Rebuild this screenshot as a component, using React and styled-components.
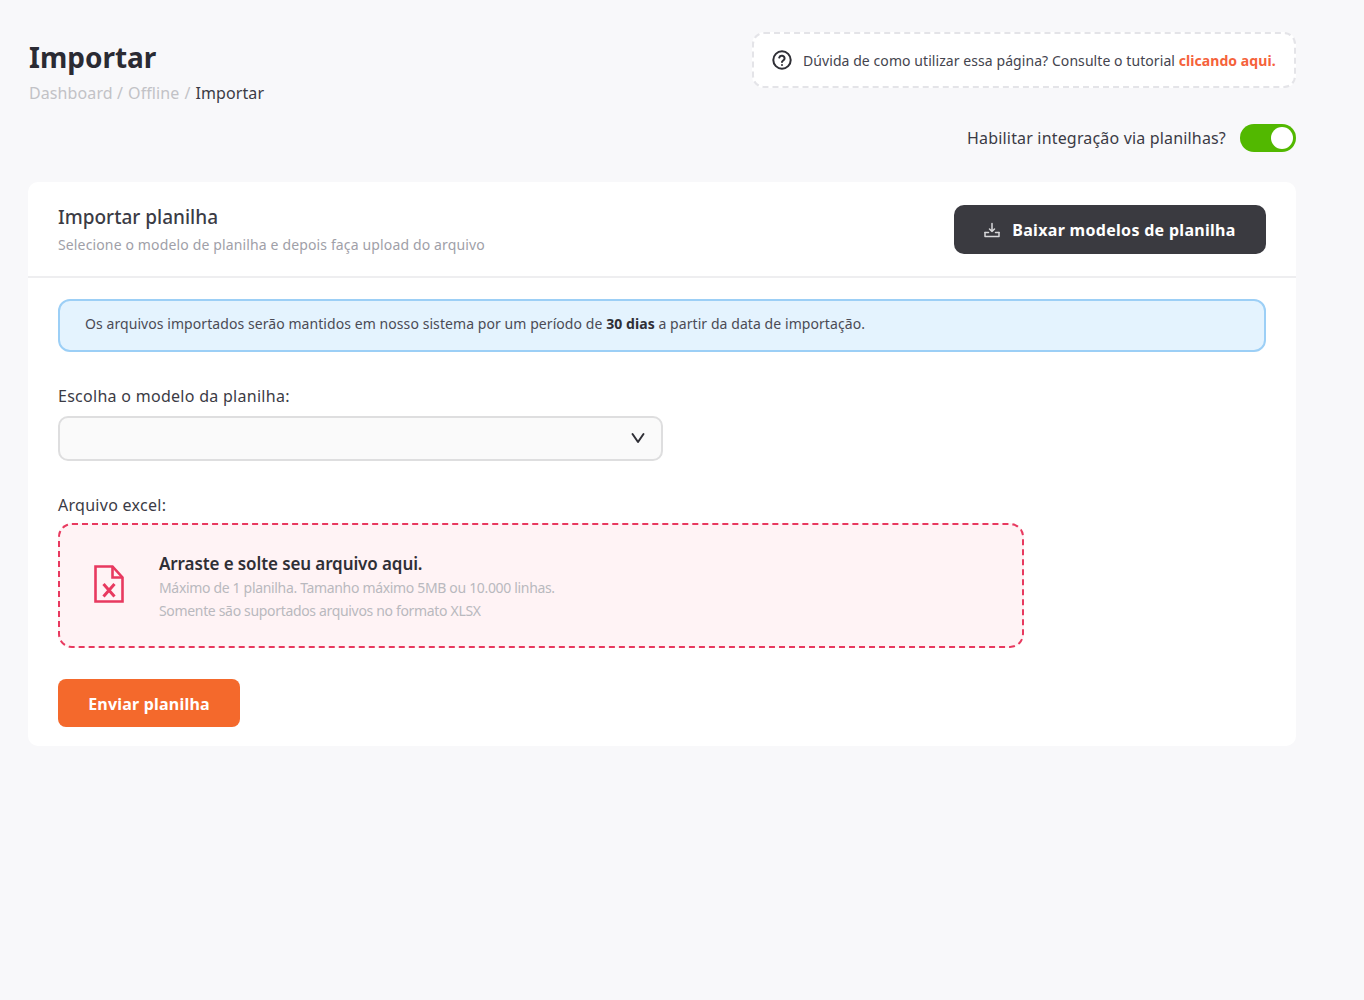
import React from "react";
import styled, { createGlobalStyle } from "styled-components";

const Global = createGlobalStyle`
  html, body { margin: 0; padding: 0; background: #f8f8fa; }
  body { font-family: "Noto Sans", "Open Sans", sans-serif; color: #2f2f36; }
  * { box-sizing: border-box; }
`;

const Page = styled.div`
  width: 1364px;
  min-height: 1000px;
  padding: 32px 68px 0 28px;
`;
const Header = styled.header`
  display: flex;
  justify-content: space-between;
  align-items: flex-start;
  height: 150px;
`;
const TitleBlock = styled.div`
  padding: 6px 0 0 1px;
`;
const Title = styled.h1`
  margin: 0;
  font-size: 28px;
  line-height: 38px;
  font-weight: 700;
  color: #2b2b33;
`;
const Crumbs = styled.div`
  margin-top: 6px;
  font-size: 16px;
  line-height: 22px;
  letter-spacing: 0.1px;
  color: #c2c2c6;
  display: flex;
  gap: 5px;
`;
const CrumbCurrent = styled.span`
  color: #3b3b45;
`;
const HeaderRight = styled.div`
  display: flex;
  flex-direction: column;
  align-items: flex-end;
  gap: 36px;
`;
const Tutorial = styled.div`
  width: 544px;
  height: 56px;
  display: flex;
  align-items: center;
  gap: 10px;
  padding-left: 17px;
  background: #fff;
  border: 2px dashed #e4e4e8;
  border-radius: 12px;
  font-size: 14px;
  letter-spacing: 0.07px;
  color: #44444e;
  white-space: nowrap;
`;
const TutorialLink = styled.b`
  color: #f5623a;
  font-weight: 700;
`;
const ToggleRow = styled.div`
  display: flex;
  align-items: center;
  gap: 14px;
  font-size: 16px;
  letter-spacing: 0.17px;
  color: #3b3b45;
  height: 28px;
`;
const Toggle = styled.div`
  position: relative;
  width: 56px;
  height: 28px;
  border-radius: 14px;
  background: #52b800;
`;
const Knob = styled.span`
  position: absolute;
  right: 3px;
  top: 3px;
  width: 22px;
  height: 22px;
  border-radius: 50%;
  background: #fff;
`;
const Card = styled.section`
  height: 564px;
  background: #fff;
  border-radius: 10px;
`;
const CardHead = styled.div`
  height: 96px;
  padding: 0 30px;
  display: flex;
  align-items: center;
  justify-content: space-between;
  border-bottom: 2px solid #eeeef0;
`;
const CardTitle = styled.h2`
  margin: 0;
  font-size: 19px;
  line-height: 26px;
  font-weight: 500;
  color: #3b3b45;
`;
const CardSub = styled.p`
  margin: 5px 0 0;
  font-size: 14px;
  line-height: 20px;
  letter-spacing: 0.14px;
  color: #a0a0a8;
`;
const DarkButton = styled.button`
  width: 312px;
  height: 49px;
  padding: 2px 0 0;
  border: 0;
  border-radius: 10px;
  background: #3a3a40;
  color: #fff;
  font: 700 16px "Noto Sans", sans-serif;
  letter-spacing: 0.3px;
  display: flex;
  align-items: center;
  justify-content: center;
  gap: 12px;
`;
const CardBody = styled.div`
  padding: 21px 30px 0;
`;
const Notice = styled.div`
  height: 53px;
  display: flex;
  align-items: center;
  padding: 0 0 5px 25px;
  background: #e4f3fe;
  border: 2px solid #9ccff6;
  border-radius: 12px;
  font-size: 14px;
  letter-spacing: 0.07px;
  color: #4b4b55;
  b { color: #2f2f36; }
`;
const Label = styled.label`
  display: block;
  font-size: 16px;
  line-height: 22px;
  letter-spacing: 0.28px;
  color: #3b3b45;
`;
const Field = styled.div`
  margin-top: ${(p) => p.$mt}px;
`;
const SelectBox = styled.div`
  margin-top: 9px;
  width: 605px;
  height: 45px;
  display: flex;
  align-items: center;
  justify-content: flex-end;
  padding: 0 15px 1px 0;
  background: #fafafa;
  border: 2px solid #dededf;
  border-radius: 10px;
`;
const Drop = styled.div`
  margin-top: 7px;
  width: 966px;
  height: 125px;
  display: flex;
  align-items: center;
  gap: 35px;
  padding-left: 34px;
  background: #fff3f5;
  border: 2px dashed #e8395f;
  border-radius: 14px;
`;
const DropText = styled.div`
  padding-top: 2px;
`;
const DropTitle = styled.div`
  font-size: 17px;
  line-height: 24px;
  font-weight: 600;
  letter-spacing: -0.1px;
  color: #2f2f36;
`;
const DropHint = styled.div`
  font-size: 14px;
  line-height: 23px;
  letter-spacing: -0.33px;
  color: #b9b9be;
`;
const SendButton = styled.button`
  display: block;
  margin-top: 31px;
  width: 182px;
  height: 48px;
  padding: 2px 0 0;
  border: 0;
  border-radius: 8px;
  background: #f4692c;
  color: #fff;
  font: 700 16px "Noto Sans", sans-serif;
  letter-spacing: 0.2px;
`;
const ExcelSvg = styled.svg`
  flex: none;
  margin-bottom: 3px;
`;

const HelpIcon = () => (
  <svg width="22" height="22" viewBox="0 0 24 24" fill="none" stroke="#2f2f36" strokeWidth="2.2" strokeLinecap="round" strokeLinejoin="round">
    <circle cx="12" cy="12" r="9.5" />
    <path d="M9 9.300a3 3 0 0 1 5.800 1c0 2-2.800 2.400-2.800 4" />
    <path d="M12 17.400h.01" />
  </svg>
);
const DownloadIcon = () => (
  <svg width="16" height="16" viewBox="0 0 16 16" fill="none" stroke="#d8d8da" strokeWidth="1.500" strokeLinecap="round" strokeLinejoin="round">
    <path d="M8 1.500v8M5.500 7l2.500 2.500L10.500 7" />
    <path d="M1 10.500V14.500h14v-4" />
    <path d="M1 10.500h3.500M11.500 10.500H15" />
  </svg>
);
const Chevron = () => (
  <svg width="16" height="16" viewBox="0 0 16 16" fill="none" stroke="#2f2f36" strokeWidth="2" strokeLinecap="round" strokeLinejoin="round">
    <path d="M2.500 4 8 12l5.500-8" />
  </svg>
);
const ExcelIcon = () => (
  <ExcelSvg width="30" height="38" viewBox="0 0 30 38" fill="none" stroke="#e8395f" strokeWidth="2.600">
    <path d="M1.500 1.500h17l10 11v24h-27z" />
    <path d="M18.500 1.500v11h10" />
    <path d="M9.500 19l11 12.500M20.500 19l-11 12.500" strokeWidth="3" />
  </ExcelSvg>
);

export default function App() {
  return (
    <Page>
      <Global />
      <Header>
        <TitleBlock>
          <Title>Importar</Title>
          <Crumbs>
            <span>Dashboard /</span>
            <span>Offline</span>
            <span>/</span>
            <CrumbCurrent>Importar</CrumbCurrent>
          </Crumbs>
        </TitleBlock>
        <HeaderRight>
          <Tutorial>
            <HelpIcon />
            <span>
              Dúvida de como utilizar essa página? Consulte o tutorial <TutorialLink>clicando aqui.</TutorialLink>
            </span>
          </Tutorial>
          <ToggleRow>
            Habilitar integração via planilhas?
            <Toggle>
              <Knob />
            </Toggle>
          </ToggleRow>
        </HeaderRight>
      </Header>
      <Card>
        <CardHead>
          <div>
            <CardTitle>Importar planilha</CardTitle>
            <CardSub>Selecione o modelo de planilha e depois faça upload do arquivo</CardSub>
          </div>
          <DarkButton>
            <DownloadIcon />
            Baixar modelos de planilha
          </DarkButton>
        </CardHead>
        <CardBody>
          <Notice>
            <span>
              Os arquivos importados serão mantidos em nosso sistema por um período de <b>30 dias</b> a partir da data de importação.
            </span>
          </Notice>
          <Field $mt={33}>
            <Label>Escolha o modelo da planilha:</Label>
            <SelectBox>
              <Chevron />
            </SelectBox>
          </Field>
          <Field $mt={33}>
            <Label>Arquivo excel:</Label>
            <Drop>
              <ExcelIcon />
              <DropText>
                <DropTitle>Arraste e solte seu arquivo aqui.</DropTitle>
                <DropHint>
                  Máximo de 1 planilha. Tamanho máximo 5MB ou 10.000 linhas.
                  <br />
                  Somente são suportados arquivos no formato XLSX
                </DropHint>
              </DropText>
            </Drop>
          </Field>
          <SendButton>Enviar planilha</SendButton>
        </CardBody>
      </Card>
    </Page>
  );
}
